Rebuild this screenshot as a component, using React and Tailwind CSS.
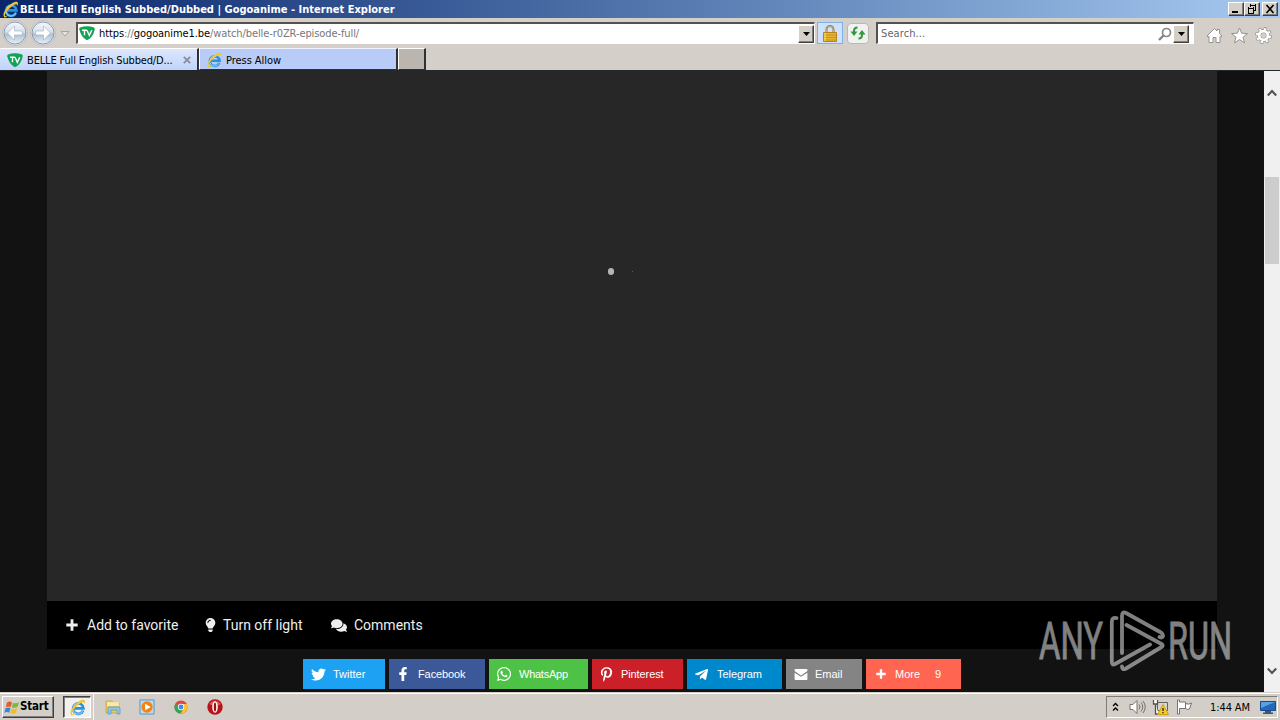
import React from 'react';
import { FaLightbulb, FaComments, FaTwitter, FaFacebookF, FaWhatsapp, FaPinterestP, FaTelegramPlane } from 'react-icons/fa';

const ui = "font-['DejaVu_Sans_Condensed','DejaVu_Sans',sans-serif] [font-stretch:condensed] whitespace-nowrap";

function IELogo({ className }) {
  return (
    <svg viewBox="0 0 16 16" className={className}>
      <path d="M13.300 10.800A4.900 4.900 0 1 1 13.600 8.800H5" fill="none" stroke="#2b93dc" strokeWidth="2.500" />
      <path d="M12.800 11.200A4.600 4.600 0 0 1 4 10.500M4.200 7a4.600 4.600 0 0 1 6-2.600" fill="none" stroke="#8ad6f8" strokeWidth="1" />
      <path d="M2.200 15.300C-.4 12.500 4 5.500 9.500 2.200c3-1.800 5.300-1.900 5.500 0 .1.800-.2 1.700-.7 2.500 0-1.600-.8-2.100-2.800-1.100C7.500 5.800 2.300 11.500 2.700 13.700c.2 1 1.700.6 3-.2-1 1.300-2.700 2.500-3.500 1.800z" fill="#f0c535" />
    </svg>
  );
}

function TvLogo({ className }) {
  return (
    <svg viewBox="0 0 16 14" className={className}>
      <path d="M1 1.500Q8-.8 15 1.500q1 .5.700 2C14.500 9 12 12.500 8.500 14h-1C4 12 1.500 8.500.3 3.500Q0 2 1 1.500z" fill="#12a454" />
      <path d="M3 4.300h5M5.500 4.300v5M8 4.300l2.300 5 2.500-5" fill="none" stroke="#fff" strokeWidth="1.400" />
    </svg>
  );
}

function NavCircle({ back }) {
  return (
    <svg viewBox="0 0 26 26" className="size-[26px] shrink-0">
      <defs>
        <linearGradient id="orb" x1="0" y1="0" x2="0" y2="1">
          <stop offset="0" stopColor="#f5f8fc" />
          <stop offset=".45" stopColor="#d8e0eb" />
          <stop offset=".55" stopColor="#b0bfd2" />
          <stop offset="1" stopColor="#e4f2fa" />
        </linearGradient>
      </defs>
      <circle cx="13" cy="13" r="12.500" fill="#e6e9ed" stroke="#b3b5b8" strokeWidth=".8" />
      <circle cx="13" cy="13" r="11" fill="url(#orb)" stroke="#8b98aa" strokeWidth="1" />
      <path d={back ? 'M12.500 6L5.500 13l7 7v-5h7.800v-4h-7.800z' : 'M13.500 6L20.500 13l-7 7v-5H5.700v-4h7.800z'} fill="#fff" stroke="#9aabbf" strokeWidth=".6" />
    </svg>
  );
}

const raised = 'bg-[#d4d0c8] border border-t-white border-l-white border-r-[#404040] border-b-[#404040] shadow-[inset_-1px_-1px_0_#808080]';

function WinButton({ children, className = '' }) {
  return (
    <div className={`${raised} flex h-[14px] w-4 items-center justify-center ${className}`}>
      <svg viewBox="0 0 12 12" className="h-3 w-3 shrink-0" fill="none" stroke="#000" shapeRendering="crispEdges">{children}</svg>
    </div>
  );
}

function DropButton({ className }) {
  return (
    <div className={`${raised} flex items-center justify-center ${className}`}>
      <svg viewBox="0 0 7 4" className="h-1 w-[7px]"><path d="M0 0h7L3.500 4z" /></svg>
    </div>
  );
}

function TitleBar() {
  return (
    <div className="flex h-[18px] shrink-0 items-center bg-linear-to-r from-[#0a246a] to-[#a6caf0] pr-[2px] pl-[2px]">
      <IELogo className="size-[17px]" />
      <span className="ml-px font-['DejaVu_Sans_Condensed','DejaVu_Sans',sans-serif] text-[11px] leading-none font-bold tracking-[0.01px] whitespace-nowrap text-white [font-stretch:condensed]">BELLE Full English Subbed/Dubbed | Gogoanime - Internet Explorer</span>
      <div className="ml-auto flex">
        <WinButton><path d="M2 9h6" strokeWidth="2" /></WinButton>
        <WinButton><path d="M4 2h6M4 1v3M9.500 1v6H8M2 5h6M2 4v6h5.500V4" /></WinButton>
        <WinButton className="ml-[2px]"><path d="M2.500 2l7 8M9.500 2l-7 8" strokeWidth="1.700" shapeRendering="auto" /></WinButton>
      </div>
    </div>
  );
}

const field = 'flex h-[22px] border-t-2 border-l-2 border-r border-b border-t-[#55514d] border-l-[#55514d] border-r-white border-b-white bg-white';

function NavBar() {
  return (
    <div className="flex h-[30px] shrink-0 items-center pl-[2px]">
      <NavCircle back />
      <div className="ml-[2px] flex"><NavCircle /></div>
      <svg viewBox="0 0 10 6" className="mt-[2px] ml-[4px] h-[6px] w-[10px]"><path d="M1 .5h8L5 5z" fill="#e7e4df" stroke="#aaa49e" /></svg>
      <div className={`${field} ml-[6px] w-[739px] items-center`}>
        <TvLogo className="mb-px ml-px h-[14px] w-4" />
        <span className={`${ui} ml-[4px] text-[11px] leading-none tracking-[-0.09px] text-[#777]`}><span className="text-black">https</span>://<span className="text-black">gogoanime1.be</span>/watch/belle-r0ZR-episode-full/</span>
        <DropButton className="ml-auto h-[18px] w-4" />
      </div>
      <div className="ml-[2px] flex h-[22px] w-[26px] items-center justify-center border border-[#7db0ee] bg-[#cfe2fa]">
        <svg viewBox="0 0 14 17" className="h-[17px] w-[14px]">
          <path d="M3.500 8V4.500a3.500 3.500 0 0 1 7 0V8" fill="none" stroke="#8c7951" strokeWidth="2" />
          <path d="M3.500 8V4.500a3.500 3.500 0 0 1 7 0V8" fill="none" stroke="#d8c48b" strokeWidth=".7" />
          <path d="M.5 7.500h13v9H.5z" fill="#e9b52d" stroke="#b88318" />
          <path d="M1 10h12M1 12.500h12M1 15h12" stroke="#bd8b1c" strokeWidth=".8" />
          <path d="M2 8v8" stroke="#ffe284" />
        </svg>
      </div>
      <div className="ml-[4px] flex h-[21px] w-[22px] items-center justify-center rounded-sm border border-[#b8b8b8] bg-[#f0f1f1]">
        <svg viewBox="0 0 16 14" className="h-[14px] w-4" fill="none" stroke="#2e9b36" strokeWidth="2">
          <path d="M7.500 1.500Q4 1.500 4 5v2M8.500 12.500Q12 12.500 12 9V7" />
          <path d="M.5 5.500h7L4 10zM8.500 8.500h7L12 4z" fill="#2e9b36" stroke="none" />
        </svg>
      </div>
      <div className={`${field} ml-[7px] w-[318px] items-center`}>
        <span className={`${ui} ml-[3px] text-[11px] leading-none tracking-[0.1px] text-[#666]`}>Search...</span>
        <svg viewBox="0 0 14 14" className="ml-auto size-[14px]" fill="none" stroke="#858585"><circle cx="8.500" cy="5.500" r="4" strokeWidth="1.700" /><path d="M5.500 8.500L1 13" strokeWidth="2.400" /></svg>
        <DropButton className="mr-[4px] ml-px h-[18px] w-4" />
      </div>
      <div className="mt-[4px] ml-[12px] flex gap-[8px]">
        <svg viewBox="0 0 17 17" className="size-[17px]" fill="#fff" stroke="#97928d"><path d="M8.500 1.500L11 4V2.500h2.500v4L16 9l-1 1.200-1-.8V15.500h-4v-5H7v5H3V9.400l-1 .8L1 9z" /></svg>
        <svg viewBox="0 0 17 17" className="size-[17px]" fill="#fff" stroke="#97928d"><path d="M8.500 1l2.200 5.200 5.800.4-4.500 3.600 1.500 5.600-5-3.200-5 3.200L5 10.200.5 6.600l5.800-.4z" /></svg>
        <svg viewBox="0 0 17 17" className="-ml-px size-[17px]" fill="none">
          <circle cx="8.500" cy="8.500" r="6.800" stroke="#97928d" strokeWidth="3.200" strokeDasharray="3.100 2.240" />
          <circle cx="8.500" cy="8.500" r="4.500" stroke="#97928d" strokeWidth="4" />
          <circle cx="8.500" cy="8.500" r="6.600" stroke="#fff" strokeWidth="2" strokeDasharray="2.200 2.983" strokeDashoffset="-.4" />
          <circle cx="8.500" cy="8.500" r="4.400" stroke="#fff" strokeWidth="2.800" />
        </svg>
      </div>
    </div>
  );
}

function Tabs() {
  return (
    <div className="flex h-[23px] shrink-0 border-b border-[#24272a]">
      <div className="flex h-[22px] w-[199px] items-center border-t border-r-2 border-t-white border-r-[#303030] bg-linear-to-b from-[#dce7fc] to-[#c0d3fa] pl-[7px]">
        <TvLogo className="mt-px h-[14px] w-4" />
        <span className={`${ui} mt-px ml-[4px] text-[11px] leading-none tracking-[-0.16px] text-black`}>BELLE Full English Subbed/D...</span>
        <svg viewBox="0 0 8 8" className="mr-[6px] ml-auto size-2"><path d="M.8.8l6.400 6.400M7.200.8L.8 7.200" stroke="#878da0" strokeWidth="1.800" /></svg>
      </div>
      <div className="flex h-[22px] w-[199px] items-center border-t border-r-2 border-b border-l border-t-[#eef3ff] border-r-[#303030] border-b-[#303030] border-l-white bg-[#b9cbf7] pl-[6px]">
        <IELogo className="mt-[2px] size-4" />
        <span className={`${ui} mt-[2px] ml-[4px] text-[11px] leading-none tracking-[-0.05px] text-black`}>Press Allow</span>
      </div>
      <div className="h-[22px] w-[28px] border-t border-r-2 border-b border-l border-t-white border-r-[#303030] border-b-[#303030] border-l-white bg-[#bab5af]" />
    </div>
  );
}

function EmailIcon({ className }) {
  return <svg viewBox="0 0 14 12" className={className}><path d="M1 0h12q1 0 1 1v1.300L7 7 0 2.300V1Q0 0 1 0zM0 4l7 4.500L14 4v7q0 1-1 1H1q-1 0-1-1z" fill="currentColor" /></svg>;
}

function PlusIcon({ className }) {
  return <svg viewBox="0 0 12 12" className={className}><path d="M6 .3v11.400M.3 6h11.400" stroke="currentColor" strokeWidth="2.800" /></svg>;
}

const shares = [
  { name: 'Twitter', Icon: FaTwitter, box: 'w-[82px] bg-[#1da1f2]', icon: 'ml-[8px] size-[15px]', text: 'ml-[7px]' },
  { name: 'Facebook', Icon: FaFacebookF, box: 'w-[96px] bg-[#3b5998]', icon: 'ml-[7px] size-[14px]', text: 'ml-[8px] tracking-[-0.1px]' },
  { name: 'WhatsApp', Icon: FaWhatsapp, box: 'w-[99px] bg-[#4dc247]', icon: 'ml-[7px] size-[16px]', text: 'ml-[7px] tracking-[-0.25px]' },
  { name: 'Pinterest', Icon: FaPinterestP, box: 'w-[91px] bg-[#cb2027]', icon: 'ml-[7px] size-[15px]', text: 'ml-[7px] tracking-[-0.1px]' },
  { name: 'Telegram', Icon: FaTelegramPlane, box: 'w-[95px] bg-[#0088cc]', icon: 'ml-[7px] size-[15px]', text: 'ml-[8px] tracking-[-0.05px]' },
  { name: 'Email', Icon: EmailIcon, box: 'w-[76px] bg-[#848484]', icon: 'ml-[8px] h-[11px] w-[14px]', text: 'ml-[7px]' },
  { name: 'More', Icon: PlusIcon, box: 'w-[95px] bg-[#ff6550]', icon: 'ml-[10px] size-[10px]', text: 'ml-[9px]', count: '9' },
];

function Watermark() {
  return (
    <svg viewBox="0 0 194 62" className="absolute top-[539px] left-[1038px] h-[62px] w-[194px] overflow-visible opacity-50" fill="#fff">
      <g fontFamily="Roboto, sans-serif" fontSize="51" stroke="#fff" strokeWidth=".8">
        <text x="1" y="49" textLength="64" lengthAdjust="spacingAndGlyphs">ANY</text>
        <text x="130" y="49" textLength="64" lengthAdjust="spacingAndGlyphs">RUN</text>
      </g>
      <path
        d="M78.500 8Q73.800 7 73.800 12V52Q74 56 77 54L112 34.500M84 43V6Q84 1 88 3L123 22.500Q126 25 124.500 27Q123.500 28 121.500 27M88.500 15L123.500 34Q126 35.500 123.500 37L88 58.500Q84 60.500 84 56.500"
        fill="none" stroke="#fff" strokeWidth="3.800" strokeLinejoin="round" strokeLinecap="round"
      />
    </svg>
  );
}

function Page() {
  return (
    <div className="relative flex h-[621px] shrink-0 bg-[#121212]">
      <div className="ml-[47px] w-[1170px]">
        <div className="flex h-[530px] items-start bg-[#272727] pt-[197px] pl-[561px]">
          <div className="h-[7px] w-[6px] rounded-full bg-[#b5b5b5]" />
          <div className="mt-[3px] ml-[18px] size-px bg-[#5c5c5c]" />
        </div>
        <div className="flex h-12 items-center bg-black font-[Roboto,sans-serif] text-[14px] leading-none whitespace-nowrap text-[#eee]">
          <div className="ml-[19px] flex w-[138px] items-center"><PlusIcon className="mr-[9px] size-[12px]" /><span>Add to favorite</span></div>
          <div className="flex w-[127px] items-center"><FaLightbulb className="mr-[6px] h-[14px] w-[13px]" /><span>Turn off light</span></div>
          <div className="flex items-center"><FaComments className="mr-[7px] h-[15px] w-[16px]" /><span>Comments</span></div>
        </div>
        <div className="mt-[10px] ml-[256px] flex gap-[4px] font-['Liberation_Sans',sans-serif] text-[11px] leading-none whitespace-nowrap text-white">
          {shares.map(({ name, Icon, box, icon, text, count }) => (
            <div key={name} className={`${box} flex h-[30px] items-center`}>
              <Icon className={`${icon} shrink-0`} />
              <span className={text}>{name}</span>
              {count && <span className="ml-[15px]">{count}</span>}
            </div>
          ))}
        </div>
      </div>
      <div className="ml-auto flex w-4 flex-col items-center bg-[#f0f0f0]">
        <svg viewBox="0 0 10 8" className="mt-[18px] h-2 w-[10px]"><path d="M.8 6.500L5 2l4.200 4.500" fill="none" stroke="#555" strokeWidth="2.200" /></svg>
        <div className="mt-[80px] h-[87px] w-[14px] bg-[#cdcdcd]" />
        <svg viewBox="0 0 10 8" className="mt-auto mb-[17px] h-2 w-[10px]"><path d="M.8 1.500L5 6l4.200-4.500" fill="none" stroke="#555" strokeWidth="2.200" /></svg>
      </div>
      <Watermark />
    </div>
  );
}

function Taskbar() {
  return (
    <div className="flex h-[28px] shrink-0 items-center border-t border-[#d4d0c8] bg-[#d4cec8] pt-px shadow-[inset_0_1px_0_#fff]">
      <div className={`${raised} ml-[2px] flex h-[22px] w-[52px] items-center`}>
        <svg viewBox="0 0 16 15" className="ml-px h-[15px] w-4">
          <path d="M3 2.500q2.500-1.800 5-.3L6.800 7q-2.500-1.300-5 .2z" fill="#e85a28" />
          <path d="M9 2.700q2.500 1.300 6-.5L13.500 7q-3 1.500-5.600.3z" fill="#77b943" />
          <path d="M1.500 8.200q2.500-1.500 5-.2L5.300 12.700q-2.500-1.300-5 .2z" fill="#348bd1" />
          <path d="M7.600 8.400q2.500 1.300 5.600-.3L12 13q-3 1.500-5.600.2z" fill="#f4bd27" />
        </svg>
        <span className="font-['DejaVu_Sans_Condensed','DejaVu_Sans',sans-serif] text-[11.5px] leading-none font-bold tracking-[-0.2px] text-black [font-stretch:condensed]">Start</span>
      </div>
      <div className="ml-[9px] flex h-[22px] w-[28px] items-center justify-center border border-t-[#404040] border-r-white border-b-white border-l-[#404040] bg-[#f2efec] shadow-[inset_1px_1px_0_#808080]"><IELogo className="size-[17px]" /></div>
      <div className="w-[3px] self-stretch border-r border-[#f7f6f4]" />
      <svg viewBox="0 0 16 16" className="ml-[11px] size-4">
        <path d="M1 2h6l1 1.500h6V14H1z" fill="#eac568" stroke="#c99d42" strokeWidth=".7" />
        <path d="M2 4h12M2 6h12" stroke="#fff4bd" strokeWidth="1.500" />
        <path d="M3 15V9.500q0-1.500 2-1.500h8q2 0 2 1.500V15h-3v-4H6v4z" fill="#8bc9e9" stroke="#4b9abf" strokeWidth=".7" />
      </svg>
      <svg viewBox="0 0 17 17" className="ml-[18px] size-[16px]">
        <path d="M1 1h15v15H1z" fill="#bed9ee" stroke="#5494c8" />
        <circle cx="8.500" cy="8.500" r="6" fill="#ef8414" /><path d="M6.500 5v7l6-3.500z" fill="#fff" />
      </svg>
      <svg viewBox="0 0 16 16" className="ml-[19px] size-[14px]">
        <circle cx="8" cy="8" r="7.500" fill="#e2463c" />
        <path d="M1.500 4.200A7.500 7.500 0 0 0 7.500 15.500L11 10 8 8z" fill="#33a852" />
        <path d="M7.500 15.500A7.500 7.500 0 0 0 14.500 4.500H8L11 10z" fill="#fbc52d" />
        <circle cx="8" cy="8" r="3.600" fill="#fff" /><circle cx="8" cy="8" r="2.800" fill="#4285f4" />
      </svg>
      <svg viewBox="0 0 16 16" className="ml-[19px] size-4"><circle cx="8" cy="8" r="7.700" fill="#b91318" /><path d="M2 5q6-7 12 0-6 3-12 0" fill="#e45a57" /><ellipse cx="8" cy="8" rx="2.800" ry="5.700" fill="#fff" /><ellipse cx="8" cy="8" rx="1.200" ry="4.600" fill="#9d1014" /></svg>
      <div className="mr-[2px] ml-auto flex h-[22px] w-[172px] items-center border border-t-[#807b77] border-r-white border-b-white border-l-[#807b77]">
        <svg viewBox="0 0 7 10" className="mb-px ml-[5px] h-[10px] w-[7px]" fill="none" stroke="#000" strokeWidth="1.400"><path d="M1 4l2.500-2.500L6 4M1 8.500L3.500 6 6 8.500" /></svg>
        <svg viewBox="0 0 17 16" className="ml-[10px] h-4 w-[17px]" fill="none" stroke="#77736f"><path d="M1 5.500h3l4-4v13l-4-4H1z" fill="#fff" /><path d="M10 5.500q2 2.500 0 5M12 3.500q3.500 4.500 0 9M14 2q4.500 6 0 12" /></svg>
        <svg viewBox="0 0 17 16" className="ml-[6px] h-4 w-[17px]">
          <path d="M5.500 3.500h10v8h-10z" fill="#d7d5d2" stroke="#66625e" />
          <path d="M1.500 1v4h4V1M3.500 5v10h3" fill="#fff" stroke="#55514d" strokeWidth="1.300" />
          <path d="M11 5.500l5.500 10h-11z" fill="#f6cd25" stroke="#d29c15" /><path d="M11 9v3M11 13v1.200" stroke="#222" strokeWidth="1.300" />
        </svg>
        <svg viewBox="0 0 17 16" className="ml-[7px] h-4 w-[17px]" fill="#fff" stroke="#77736f"><path d="M1.500 1v14h2V9.500h6V3h-6V1zM9.500 4.500q3 1.500 6-.5l-2 6q-2 1-4-.5" /></svg>
        <span className={`${ui} ml-[17px] text-[11px] leading-none tracking-[-0.1px] text-black`}>1:44 AM</span>
        <svg viewBox="0 0 16 14" className="mr-px ml-auto h-[14px] w-4"><path d="M.5 1.500h15v9H.5z" fill="#2269bd" stroke="#174a86" /><path d="M1 2h14L1 8z" fill="#5da0df" /><path d="M5 11h6v1.500h2V14H3v-1.500h2z" fill="#3c5878" /></svg>
      </div>
    </div>
  );
}

export default function App() {
  return (
    <div className="flex h-[720px] w-[1280px] flex-col overflow-hidden bg-[#d5cfc9]">
      <TitleBar />
      <NavBar />
      <Tabs />
      <Page />
      <Taskbar />
    </div>
  );
}
